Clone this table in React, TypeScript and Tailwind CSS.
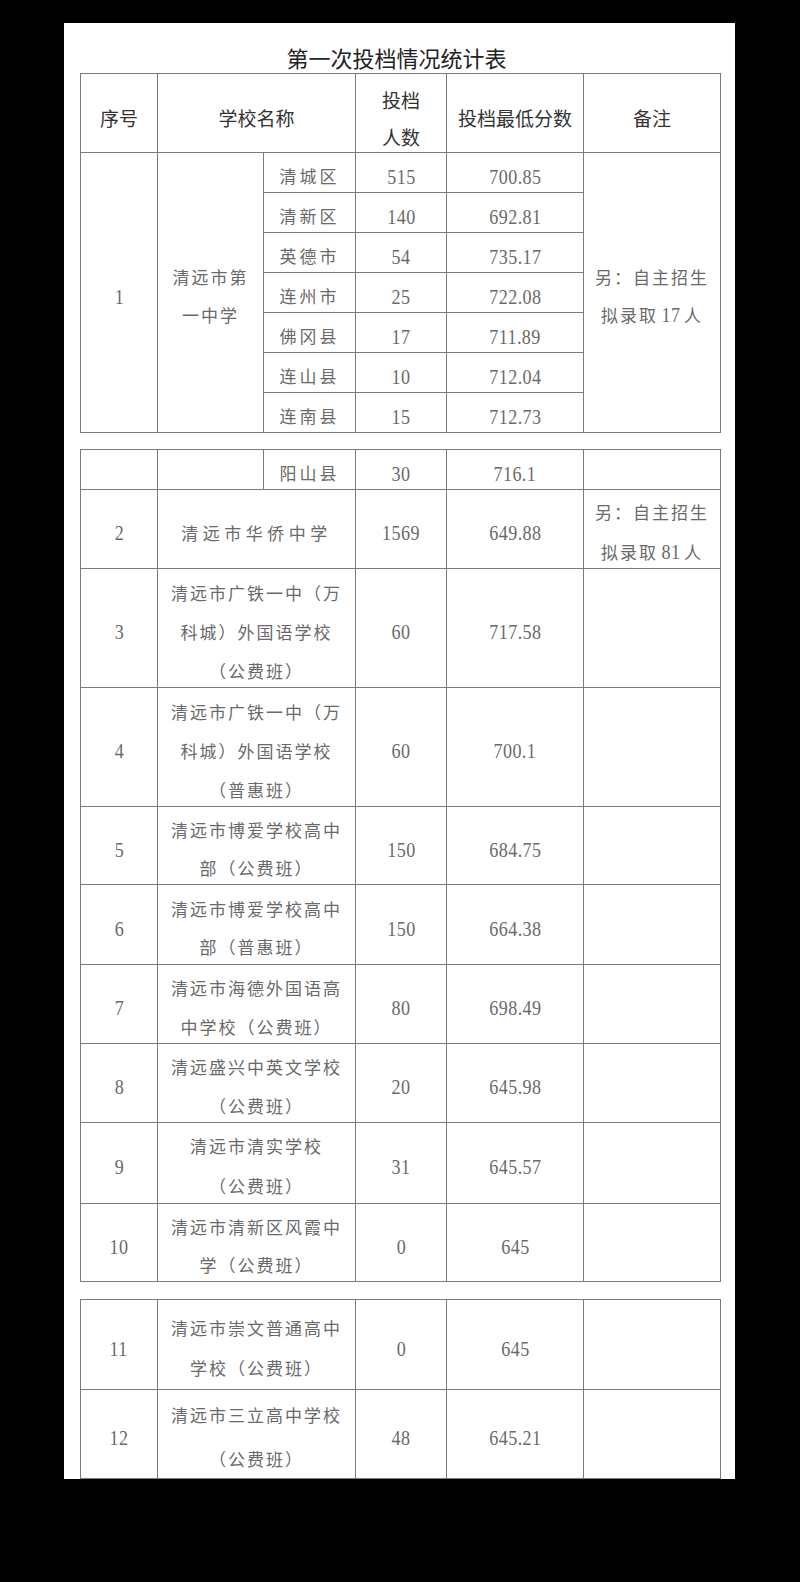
import React from 'react';

type Row = {
  no: string;
  name: string[];
  count: string;
  score: string;
  h: string;
  lead?: string;
  track?: string;
  remark?: React.ReactNode[];
};

const cell = 'border border-[#7b7b7b] p-0 text-center align-middle';
const head = "font-['Noto_Sans_CJK_SC',sans-serif] text-[19px] text-[#333]";
const body = "font-['Liberation_Serif','Noto_Sans_CJK_SC',serif] text-[17px] text-[#6a6a6a]";

const districts = [
  ['清城区', '515', '700.85'],
  ['清新区', '140', '692.81'],
  ['英德市', '54', '735.17'],
  ['连州市', '25', '722.08'],
  ['佛冈县', '17', '711.89'],
  ['连山县', '10', '712.04'],
  ['连南县', '15', '712.73'],
];

const middle: Row[] = [
  { no: '3', name: ['清远市广铁一中（万', '科城）外国语学校', '（公费班）'], count: '60', score: '717.58', h: 'h-[119px]' },
  { no: '4', name: ['清远市广铁一中（万', '科城）外国语学校', '（普惠班）'], count: '60', score: '700.1', h: 'h-[119px]' },
  { no: '5', name: ['清远市博爱学校高中', '部（公费班）'], count: '150', score: '684.75', h: 'h-[78px]', lead: 'leading-[38px]' },
  { no: '6', name: ['清远市博爱学校高中', '部（普惠班）'], count: '150', score: '664.38', h: 'h-[80px]', lead: 'leading-[38px]' },
  { no: '7', name: ['清远市海德外国语高', '中学校（公费班）'], count: '80', score: '698.49', h: 'h-[79px]' },
  { no: '8', name: ['清远盛兴中英文学校', '（公费班）'], count: '20', score: '645.98', h: 'h-[79px]' },
  { no: '9', name: ['清远市清实学校', '（公费班）'], count: '31', score: '645.57', h: 'h-[80px]', lead: 'leading-[40px]' },
  { no: '10', name: ['清远市清新区风霞中', '学（公费班）'], count: '0', score: '645', h: 'h-[78px]', lead: 'leading-[38px]' },
];

const last: Row[] = [
  { no: '11', name: ['清远市崇文普通高中', '学校（公费班）'], count: '0', score: '645', h: 'h-[90px]', lead: 'leading-[40px]' },
  { no: '12', name: ['清远市三立高中学校', '（公费班）'], count: '48', score: '645.21', h: 'h-[89px]', lead: 'leading-[44px]' },
];

// scanned digits are tall and narrow
function Num({ children }: { children: React.ReactNode }) {
  return <span className="inline-block text-[21px] tracking-[0.5px] scale-x-[0.86]">{children}</span>;
}

function Text({
  lines,
  lead = 'leading-[39px]',
  track = 'tracking-[2px]',
}: {
  lines: React.ReactNode[];
  lead?: string;
  track?: string;
}) {
  return (
    <div className={`translate-y-[5px] ${lead} ${track}`}>
      {lines.map((l, i) => (
        <div key={i}>{l}</div>
      ))}
    </div>
  );
}

function Cols() {
  return (
    <colgroup>
      <col className="w-[77px]" />
      <col className="w-[106px]" />
      <col className="w-[92px]" />
      <col className="w-[91px]" />
      <col className="w-[137px]" />
      <col className="w-[137px]" />
    </colgroup>
  );
}

function SchoolRow({ r }: { r: Row }) {
  return (
    <tr className={r.h}>
      <td className={cell}>
        <Text lines={[<Num>{r.no}</Num>]} />
      </td>
      <td className={cell} colSpan={2}>
        <Text lines={r.name} lead={r.lead} track={r.track} />
      </td>
      <td className={cell}>
        <Text lines={[<Num>{r.count}</Num>]} />
      </td>
      <td className={cell}>
        <Text lines={[<Num>{r.score}</Num>]} />
      </td>
      <td className={cell}>{r.remark && <Text lines={r.remark} lead="leading-[38px]" />}</td>
    </tr>
  );
}

export default function App() {
  return (
    <div className="w-[800px] h-[1582px] bg-black pt-[23px] pl-[64px]">
      <div className="w-[671px] h-[1456px] bg-white overflow-hidden">
        <div className="pt-[23px] pb-[5px] pr-[6px] h-[50px] text-center font-['Noto_Sans_CJK_SC',sans-serif] text-[22px] leading-[22px] text-[#222]">
          第一次投档情况统计表
        </div>

        <table className={`table-fixed w-[640px] ml-[16px] ${body}`}>
          <Cols />
          <tbody>
            <tr className={`h-[79px] ${head}`}>
              <td className={cell}>
                <div className="translate-y-[5px]">序号</div>
              </td>
              <td className={cell} colSpan={2}>
                <div className="translate-y-[5px]">学校名称</div>
              </td>
              <td className={cell}>
                <div className="translate-y-[5px] leading-[37px]">
                  <div>投档</div>
                  <div>人数</div>
                </div>
              </td>
              <td className={cell}>
                <div className="translate-y-[5px]">投档最低分数</div>
              </td>
              <td className={cell}>
                <div className="translate-y-[5px]">备注</div>
              </td>
            </tr>
            {districts.map(([d, c, s], i) => (
              <tr key={d} className="h-[40px]">
                {i === 0 && (
                  <>
                    <td className={cell} rowSpan={7}>
                      <Text lines={[<Num>1</Num>]} />
                    </td>
                    <td className={cell} rowSpan={7}>
                      <Text lines={['清远市第', '一中学']} lead="leading-[38px]" />
                    </td>
                  </>
                )}
                <td className={cell}>
                  <Text lines={[d]} lead="leading-[24px]" track="tracking-[3px]" />
                </td>
                <td className={cell}>
                  <Text lines={[<Num>{c}</Num>]} lead="leading-[24px]" />
                </td>
                <td className={cell}>
                  <Text lines={[<Num>{s}</Num>]} lead="leading-[24px]" />
                </td>
                {i === 0 && (
                  <td className={cell} rowSpan={7}>
                    <Text
                      lines={[
                        '另：自主招生',
                        <>
                          拟录取<span className="mx-[2px]"><Num>17</Num></span>人
                        </>,
                      ]}
                      lead="leading-[37px]"
                    />
                  </td>
                )}
              </tr>
            ))}
          </tbody>
        </table>

        <table className={`table-fixed w-[640px] ml-[16px] mt-[16px] ${body}`}>
          <Cols />
          <tbody>
            <tr className="h-[40px]">
              <td className={cell}></td>
              <td className={cell}></td>
              <td className={cell}>
                <Text lines={['阳山县']} lead="leading-[24px]" track="tracking-[3px]" />
              </td>
              <td className={cell}>
                <Text lines={[<Num>30</Num>]} lead="leading-[24px]" />
              </td>
              <td className={cell}>
                <Text lines={[<Num>716.1</Num>]} lead="leading-[24px]" />
              </td>
              <td className={cell}></td>
            </tr>
            <SchoolRow
              r={{
                no: '2',
                name: ['清远市华侨中学'],
                count: '1569',
                score: '649.88',
                h: 'h-[79px]',
                track: 'tracking-[4.5px]',
                remark: [
                  '另：自主招生',
                  <>
                    拟录取<span className="mx-[2px]"><Num>81</Num></span>人
                  </>,
                ],
              }}
            />
            {middle.map((r) => (
              <SchoolRow key={r.no} r={r} />
            ))}
          </tbody>
        </table>

        <table className={`table-fixed w-[640px] ml-[16px] mt-[17px] ${body}`}>
          <Cols />
          <tbody>
            {last.map((r) => (
              <SchoolRow key={r.no} r={r} />
            ))}
            <tr className="h-[40px]">
              <td className={cell}></td>
              <td className={cell} colSpan={2}></td>
              <td className={cell}></td>
              <td className={cell}></td>
              <td className={cell}></td>
            </tr>
          </tbody>
        </table>
      </div>
    </div>
  );
}
